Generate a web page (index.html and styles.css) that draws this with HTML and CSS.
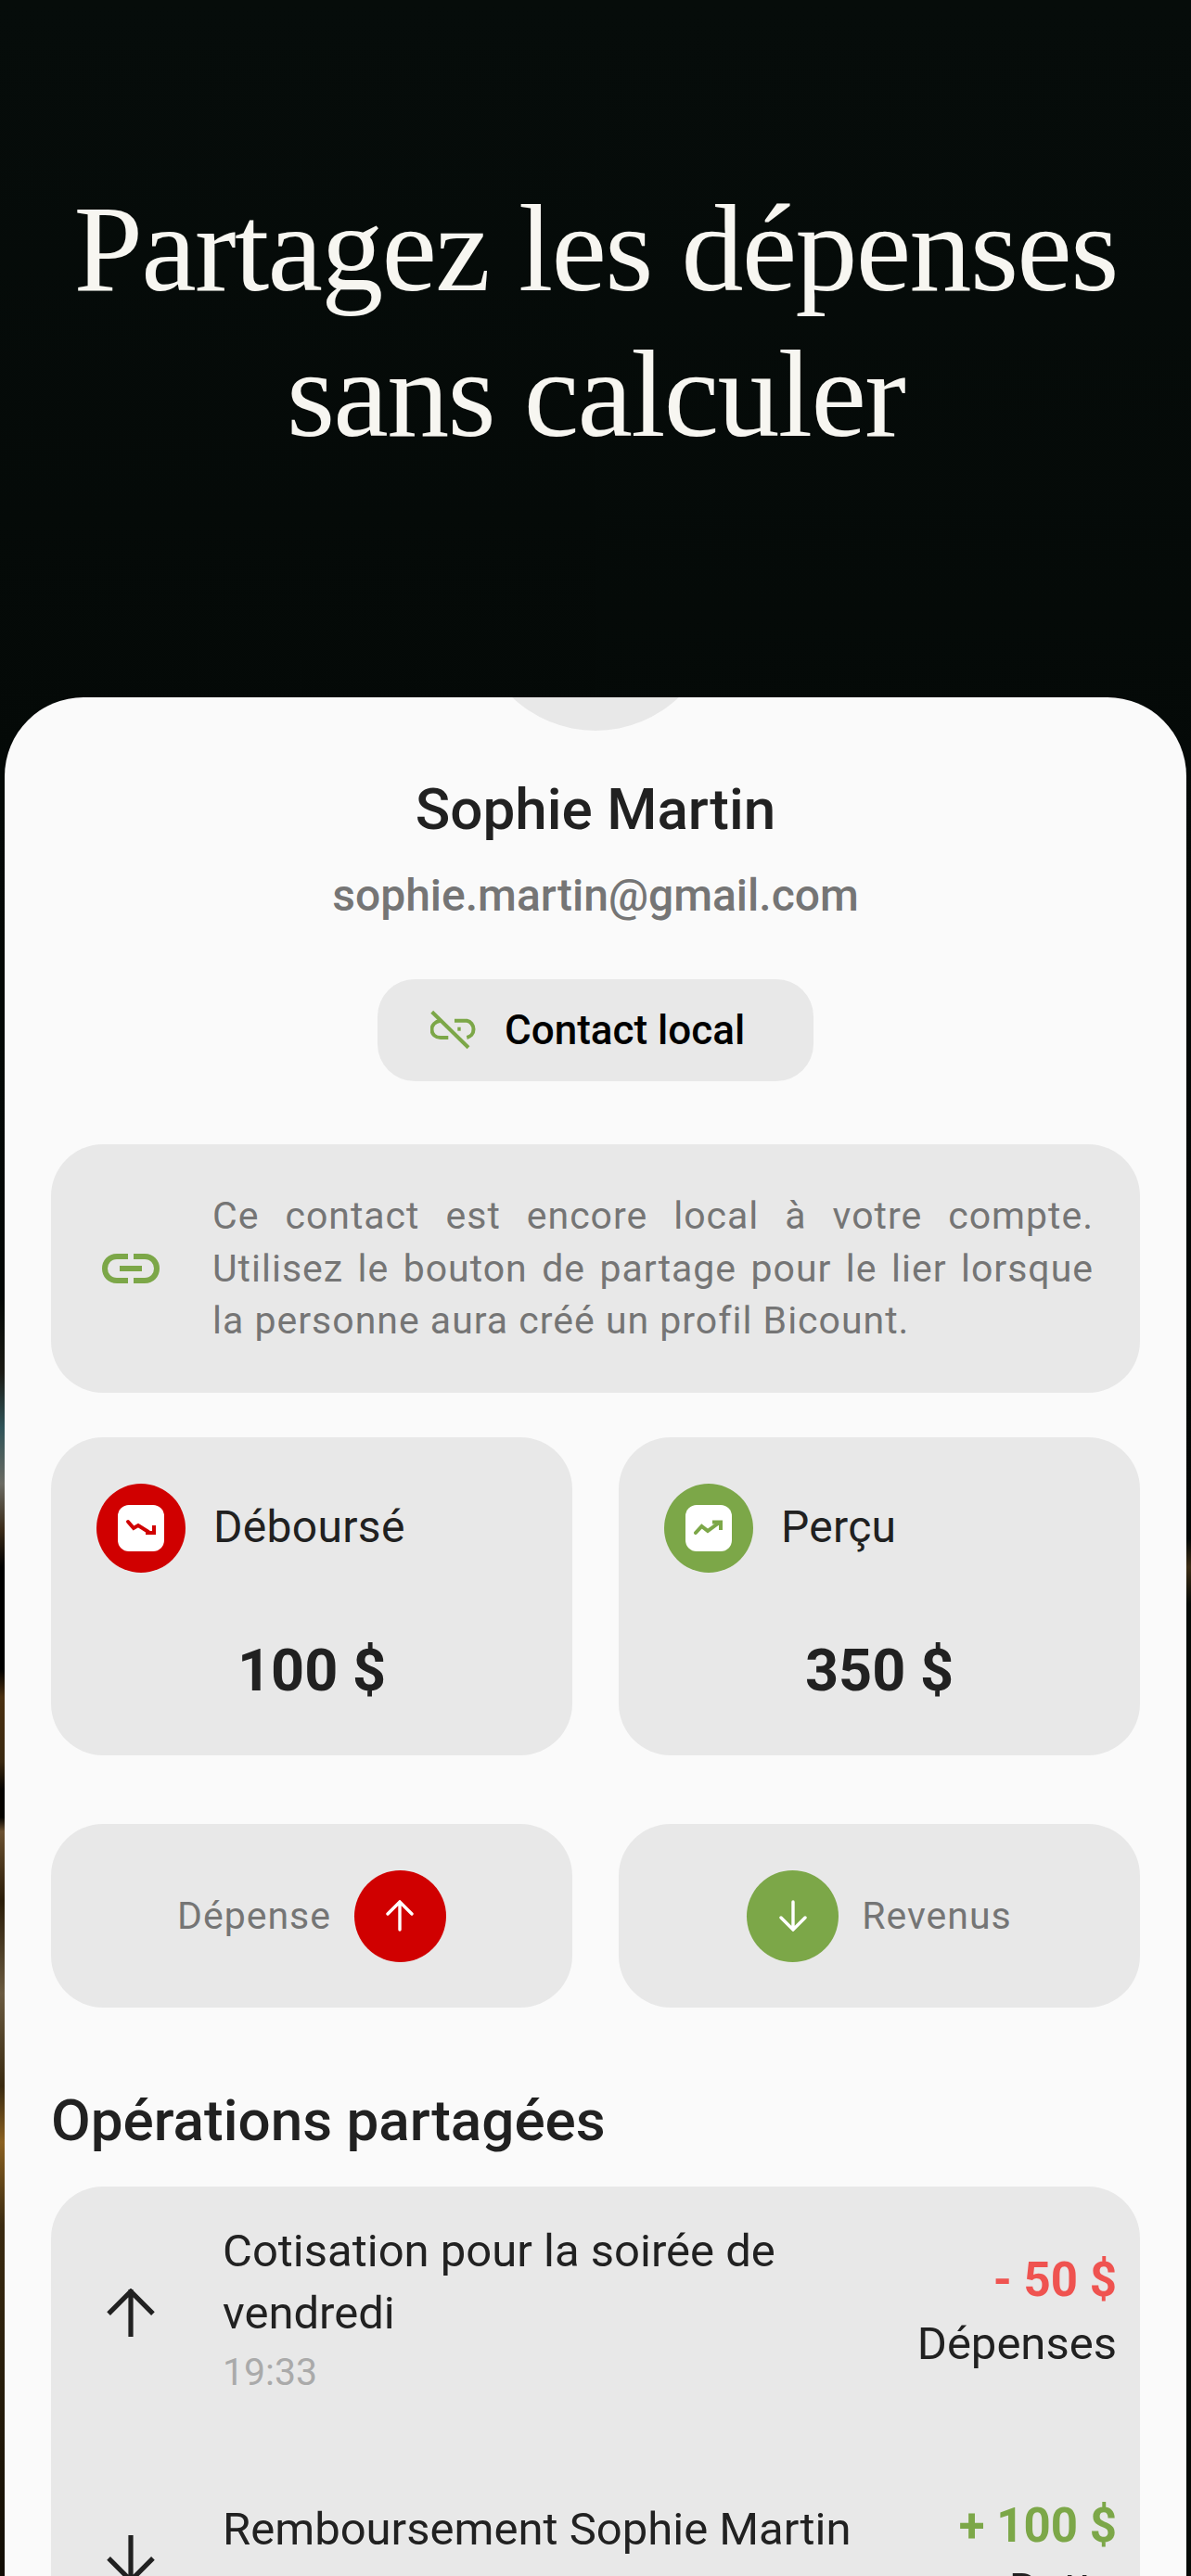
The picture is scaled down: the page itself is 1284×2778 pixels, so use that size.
FILE: index.html
```html
<!DOCTYPE html>
<html lang="fr">
<head>
<meta charset="utf-8">
<title>Partagez les dépenses</title>
<link rel="stylesheet" href="styles.css">
</head>
<body>
<main class="screen">
  <header class="hero">
    <h1 class="hero-title">Partagez les dépenses<br>sans calculer</h1>
  </header>
  <section class="sheet">
    <div class="avatar"></div>
    <h2 class="name">Sophie Martin</h2>
    <p class="email">sophie.martin@gmail.com</p>
    <div class="pill">
      <svg class="pill-icon" viewBox="0 0 50 50" fill="none" stroke="#7ca748" stroke-width="4">
        <path d="M1.7 5.3 L41 43.7"/>
        <path d="M11 14.7 C5 15.5 1.5 19.5 1.5 24.5 C1.5 29.5 5.5 33 11 33 L19.3 33"/>
        <path d="M26 14.7 L39.3 14.7 C43.5 15.5 46.5 19.5 46.5 24 C46.5 28.5 43.5 32 39.3 33"/>
        <path d="M29.3 23.7 L32.7 23.7"/>
      </svg>
      <span>Contact local</span>
    </div>
    <div class="panel info">
      <svg class="info-icon" viewBox="0 0 62 32" fill="none" stroke="#7ca748" stroke-width="6">
        <path d="M28 3 L16 3 C8 3 3 9 3 16 C3 23 8 29 16 29 L28 29"/>
        <path d="M34 3 L46 3 C54 3 59 9 59 16 C59 23 54 29 46 29 L34 29"/>
        <path d="M19 16 L43 16"/>
      </svg>
      <p class="info-text">Ce contact est encore local à votre compte. Utilisez le bouton de partage pour le lier lorsque la personne aura créé un profil Bicount.</p>
    </div>
    <div class="two-col stats">
      <div class="panel stat">
        <div class="stat-head">
          <span class="badge badge-red">
            <span class="tile">
              <svg viewBox="0 0 50 50" fill="none" stroke="#d00000" stroke-width="4" stroke-linecap="round">
                <path d="M11 18 L17 25 L22 22 L33 29"/>
                <path d="M39 22 L39 30 L30 30" stroke-linecap="butt"/>
              </svg>
            </span>
          </span>
          <span class="stat-label">Déboursé</span>
        </div>
        <div class="stat-value">100 $</div>
      </div>
      <div class="panel stat">
        <div class="stat-head">
          <span class="badge badge-green">
            <span class="tile">
              <svg viewBox="0 0 50 50" fill="none" stroke="#7ca748" stroke-width="4" stroke-linecap="round">
                <path d="M11 30 L17.5 23 L24 28 L35 20"/>
                <path d="M29 18.5 L38 18.5 L38 27" stroke-linecap="butt"/>
              </svg>
            </span>
          </span>
          <span class="stat-label">Perçu</span>
        </div>
        <div class="stat-value">350 $</div>
      </div>
    </div>
    <div class="two-col actions">
      <div class="panel action">
        <span class="action-label">Dépense</span>
        <span class="round round-red">
          <svg viewBox="0 0 32 34" fill="none" stroke="#fff" stroke-width="3.4" stroke-linecap="round"><path d="M16 2 L16 32 M3 15 L16 2 L29 15"/></svg>
        </span>
      </div>
      <div class="panel action">
        <span class="round round-green">
          <svg viewBox="0 0 32 34" fill="none" stroke="#fff" stroke-width="3.4" stroke-linecap="round"><path d="M16 2 L16 32 M3 19 L16 32 L29 19"/></svg>
        </span>
        <span class="action-label">Revenus</span>
      </div>
    </div>
    <h3 class="section-title">Opérations partagées</h3>
    <div class="panel ops">
      <div class="op op-first">
        <svg class="op-icon" viewBox="0 0 50 50" fill="none" stroke="#212121" stroke-width="5"><path d="M25 1 L25 50 M2 26 L25 3 L48 26"/></svg>
        <div class="op-main">
          <div class="op-title">Cotisation pour la soirée de vendredi</div>
          <div class="op-time">19:33</div>
        </div>
        <div class="op-side">
          <div class="op-amount neg">- 50 $</div>
          <div class="op-kind">Dépenses</div>
        </div>
      </div>
      <div class="op op-second">
        <svg class="op-icon" viewBox="0 0 50 50" fill="none" stroke="#212121" stroke-width="5"><path d="M25 0 L25 49 M2 24 L25 47 L48 24"/></svg>
        <div class="op-main">
          <div class="op-title">Remboursement Sophie Martin</div>
        </div>
        <div class="op-side">
          <div class="op-amount pos">+ 100 $</div>
          <div class="op-kind">Dette</div>
        </div>
      </div>
    </div>
  </section>
</main>
</body>
</html>
```

FILE: styles.css
```css
* { box-sizing: border-box; }
html, body { margin: 0; padding: 0; }
body { height: 2778px; overflow: hidden; background: #040806; font-family: Roboto, "Liberation Sans", sans-serif; }
.screen {
  height: 2778px;
  overflow: hidden;
  display: flex;
  flex-direction: column;
  background-color: #050a07;
  background-image:
    linear-gradient(180deg, #060c0a 0, #030705 1400px, #1a1a14 1480px, #2f5358 1540px, #6a6a62 1600px, #3a2a18 1650px, #000 1690px, #000 1800px, #4a3010 1830px, #3a2810 1900px, #050300 1930px, #050300 1960px, #6a5030 1975px, #2a1c08 2050px, #6a5a40 2150px, #3a2a10 2250px, #8a6020 2310px, #3a2a10 2400px, #100c04 2778px),
    linear-gradient(180deg, #060c0a 0, #030705 1660px, #3a2c14 1690px, #050a06 1730px);
  background-repeat: no-repeat;
  background-position: left top, right top;
  background-size: 50% 100%, 50% 100%;
}
.hero { height: 752px; flex: none; padding-top: 190px; }
.hero-title {
  margin: 0;
  font-family: "Liberation Serif", serif;
  font-weight: 400;
  font-size: 134px;
  line-height: 157px;
  letter-spacing: -1.7px;
  text-align: center;
  color: #f7f6f1;
}
.sheet {
  position: relative;
  margin: 0 5px 0 5px;
  padding: 0 50px;
  flex: 1;
  overflow: hidden;
  background: #fafafa;
  border-radius: 85px 85px 0 0;
  display: flex;
  flex-direction: column;
  align-items: stretch;
}
.sheet > * { flex: none; }
.avatar {
  position: absolute;
  left: 507px;
  top: -224px;
  width: 260px;
  height: 260px;
  border-radius: 50%;
  background: #e8e8e8;
}
.name {
  margin: 83px 0 0;
  font-size: 62px;
  line-height: 76px;
  font-weight: 500;
  color: #212121;
  text-align: center;
}
.email {
  margin: 27px 0 0;
  font-size: 48px;
  line-height: 56px;
  font-weight: 500;
  color: #757575;
  text-align: center;
}
.pill {
  align-self: center;
  margin-top: 62px;
  width: 470px;
  height: 110px;
  border-radius: 40px;
  background: #e8e8e8;
  display: flex;
  align-items: center;
  padding-left: 57px;
  gap: 30px;
  color: #000;
  font-size: 44px;
  font-weight: 500;
}
.pill-icon { width: 50px; height: 50px; flex: none; }
.panel { background: #e8e8e8; border-radius: 56px; }
.info {
  margin-top: 68px;
  height: 268px;
  display: flex;
  align-items: center;
  padding: 0 50px 0 55px;
  gap: 57px;
}
.info-icon { width: 62px; height: 32px; flex: none; }
.info-text {
  margin: 0;
  font-size: 41px;
  line-height: 56.5px;
  letter-spacing: 1px;
  color: #757575;
  text-align: justify;
}
.two-col { display: grid; grid-template-columns: 562px 562px; gap: 50px; }
.stats { margin-top: 48px; }
.stat { height: 343px; padding: 50px 49px 0; }
.stat-head { display: flex; align-items: center; gap: 30px; }
.badge {
  width: 96px;
  height: 96px;
  border-radius: 50%;
  display: flex;
  align-items: center;
  justify-content: center;
  flex: none;
}
.badge-red { background: #d00000; }
.badge-green { background: #7ca748; }
.tile {
  width: 50px;
  height: 50px;
  border-radius: 12px;
  background: #fff;
  display: flex;
}
.tile svg { width: 50px; height: 50px; }
.stat-label { font-size: 48px; color: #212121; letter-spacing: 0.3px; margin-top: -3px; }
.stat-value {
  margin: 69px -49px 0;
  text-align: center;
  font-size: 63px;
  line-height: 74px;
  font-weight: 700;
  color: #212121;
}
.actions { margin-top: 74px; }
.action {
  height: 198px;
  display: flex;
  align-items: center;
  justify-content: center;
  gap: 25px;
}
.action-label { font-size: 41px; color: #757575; letter-spacing: 1px; }
.round {
  width: 99px;
  height: 99px;
  border-radius: 50%;
  display: flex;
  align-items: center;
  justify-content: center;
  flex: none;
}
.round svg { width: 32px; height: 34px; }
.round-red { background: #d00000; }
.round-green { background: #7ca748; }
.section-title {
  margin: 85px 0 0;
  font-size: 62px;
  line-height: 74px;
  font-weight: 500;
  color: #212121;
}
.ops {
  margin-top: 34px;
  height: 600px;
  border-radius: 56px 56px 0 0;
  padding: 23px 25px 0 60px;
}
.op { display: flex; align-items: center; }
.op-first { height: 220px; }
.op-first .op-icon { margin-top: 6px; }
.op-first .op-side { margin-top: 4px; }
.op-second { margin-top: 93px; height: 220px; align-items: flex-start; }
.op-icon { width: 52px; height: 52px; flex: none; }
.op-second .op-icon { margin-top: 40px; }
.op-main { margin-left: 73px; width: 640px; flex: none; }
.op-second .op-main { width: 700px; }
.op-title { font-size: 49px; line-height: 67px; color: #212121; }
.op-time { font-size: 41px; line-height: 60px; color: #aaa; }
.op-side { flex: 1; text-align: right; min-width: 0; }
.op-amount { font-size: 51px; line-height: 60px; font-weight: 700; }
.op-kind { font-size: 49px; line-height: 60px; margin-top: 9px; color: #212121; }
.neg { color: #ef5350; }
.pos { color: #7ca748; }
```
